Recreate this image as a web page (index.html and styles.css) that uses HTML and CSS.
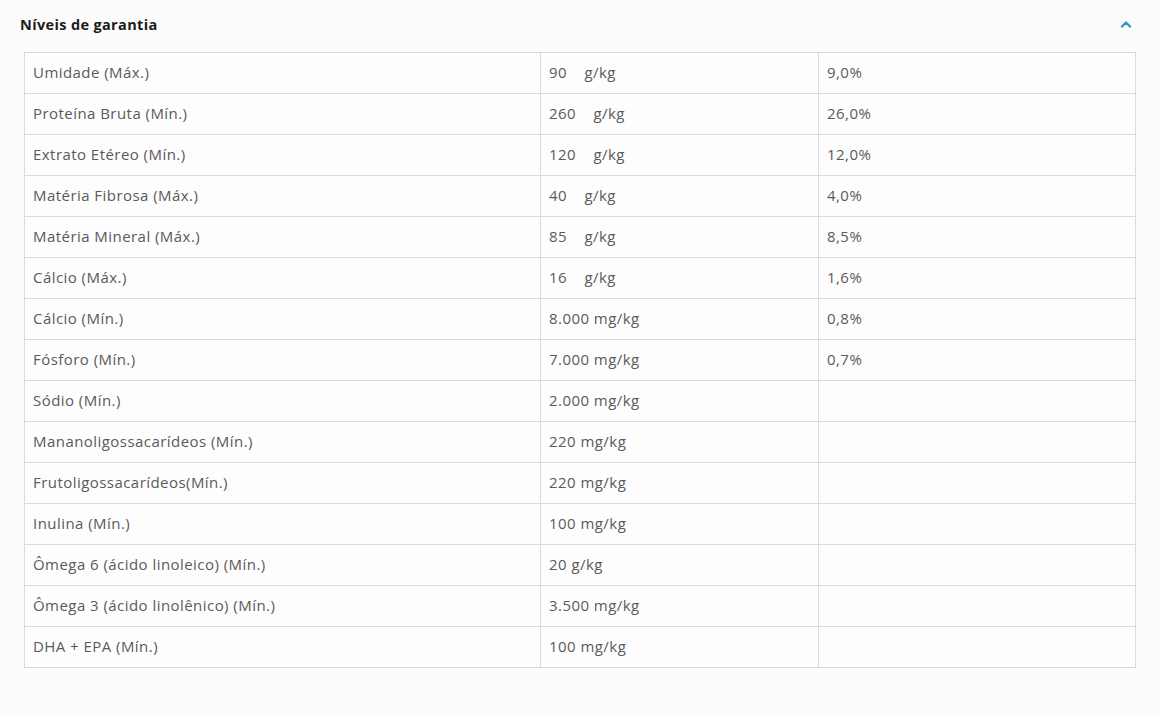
FILE: index.html
```html
<!DOCTYPE html>
<html lang="pt">
<head>
<meta charset="utf-8">
<link rel="stylesheet" href="styles.css">
</head>
<body>
<section class="acc">
  <div class="acc-head">
    <h3 class="acc-title">Níveis de garantia</h3>
    <svg class="chev" width="12" height="8" viewBox="0 0 12 8"><path d="M2 6.5 L6 2.5 L10 6.5" fill="none" stroke="#3b93cc" stroke-width="2.4" stroke-linecap="round" stroke-linejoin="round"/></svg>
  </div>
  <table class="tbl">
    <colgroup><col class="c1"><col class="c2"><col class="c3"></colgroup>
    <tbody>
      <tr><td>Umidade (Máx.)</td><td class="pre">90    g/kg</td><td>9,0%</td></tr>
      <tr><td>Proteína Bruta (Mín.)</td><td class="pre">260    g/kg</td><td>26,0%</td></tr>
      <tr><td>Extrato Etéreo (Mín.)</td><td class="pre">120    g/kg</td><td>12,0%</td></tr>
      <tr><td>Matéria Fibrosa (Máx.)</td><td class="pre">40    g/kg</td><td>4,0%</td></tr>
      <tr><td>Matéria Mineral (Máx.)</td><td class="pre">85    g/kg</td><td>8,5%</td></tr>
      <tr><td>Cálcio (Máx.)</td><td class="pre">16    g/kg</td><td>1,6%</td></tr>
      <tr><td>Cálcio (Mín.)</td><td>8.000 mg/kg</td><td>0,8%</td></tr>
      <tr><td>Fósforo (Mín.)</td><td>7.000 mg/kg</td><td>0,7%</td></tr>
      <tr><td>Sódio (Mín.)</td><td>2.000 mg/kg</td><td></td></tr>
      <tr><td>Mananoligossacarídeos (Mín.)</td><td>220 mg/kg</td><td></td></tr>
      <tr><td>Frutoligossacarídeos(Mín.)</td><td>220 mg/kg</td><td></td></tr>
      <tr><td>Inulina (Mín.)</td><td>100 mg/kg</td><td></td></tr>
      <tr><td>Ômega 6 (ácido linoleico) (Mín.)</td><td>20 g/kg</td><td></td></tr>
      <tr><td>Ômega 3 (ácido linolênico) (Mín.)</td><td>3.500 mg/kg</td><td></td></tr>
      <tr><td>DHA + EPA (Mín.)</td><td>100 mg/kg</td><td></td></tr>
    </tbody>
  </table>
</section>
</body>
</html>
```
FILE: styles.css
```css
html, body {
  margin: 0;
  padding: 0;
  background: #fdfcfd;
  font-family: "Open Sans", "Noto Sans", sans-serif;
}
.acc {
  padding: 0 26px 0 20px;
}
.acc-head {
  display: flex;
  align-items: center;
  justify-content: space-between;
  height: 50px;
}
.acc-title {
  margin: 0 0 1px 0;
  font-size: 14.5px;
  font-weight: 700;
  color: #1b1b1b;
  letter-spacing: 0.35px;
}
.chev {
  margin-right: 3px;
  margin-top: -2px;
}
.tbl {
  margin: 2px 0 0 4px;
  border-collapse: collapse;
  table-layout: fixed;
  width: 1111px;
  background: #fefdfe;
}
.c1 { width: 516px; }
.c2 { width: 278px; }
.c3 { width: 317px; }
.tbl td {
  border: 1px solid #dcdadc;
  height: 41px;
  padding: 0 8px 2px 8px;
  box-sizing: border-box;
  font-size: 15px;
  letter-spacing: 0.45px;
  color: #5a5a5a;
  vertical-align: middle;
  white-space: nowrap;
}
.tbl td.pre {
  white-space: pre;
}
```
